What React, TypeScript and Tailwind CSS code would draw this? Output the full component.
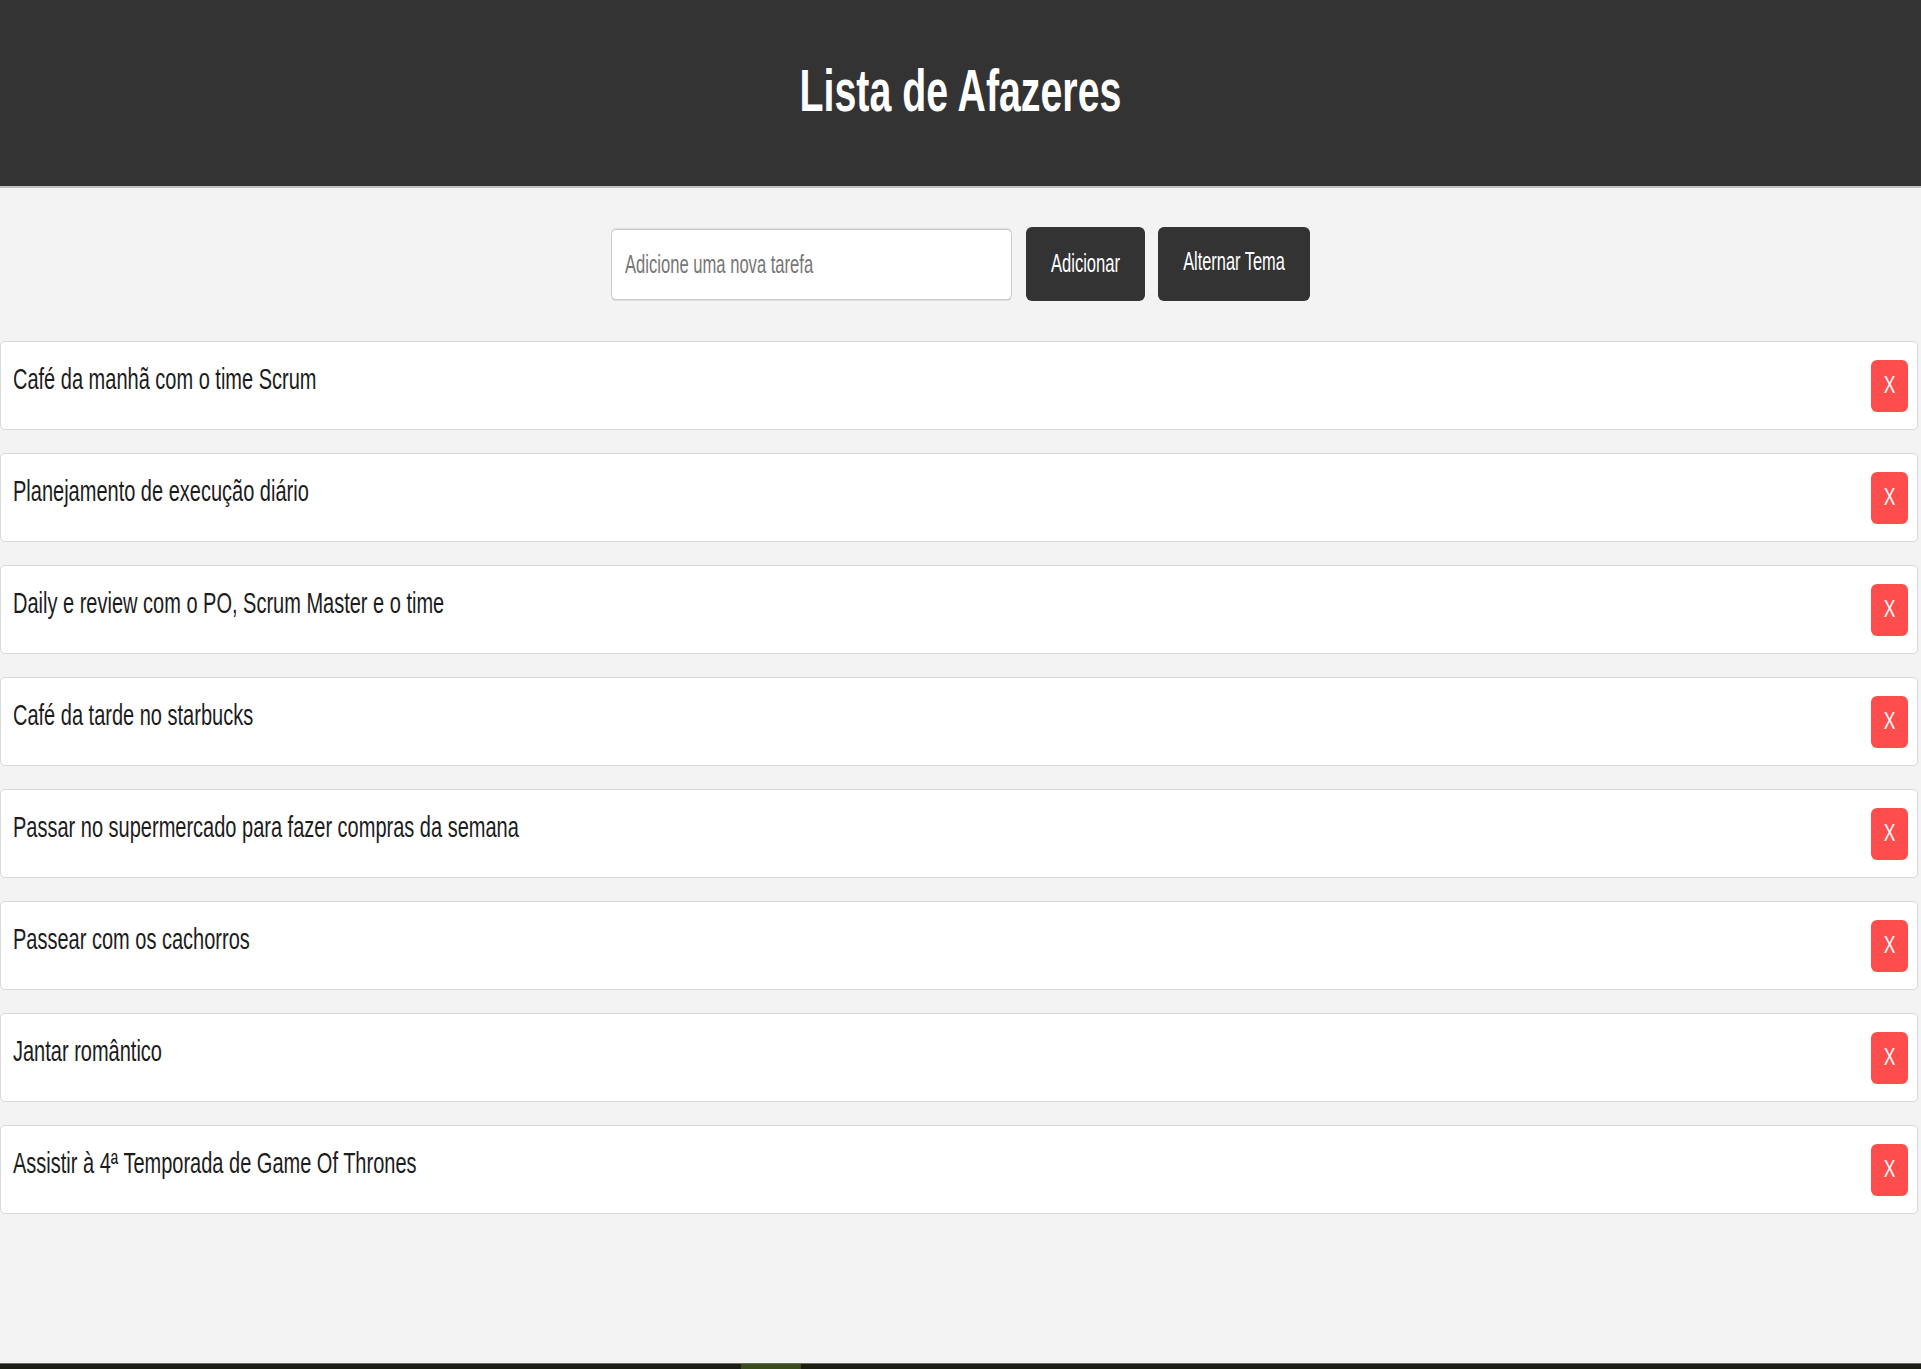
import React from 'react';

const TAREFAS = [
  'Café da manhã com o time Scrum',
  'Planejamento de execução diário',
  'Daily e review com o PO, Scrum Master e o time',
  'Café da tarde no starbucks',
  'Passar no supermercado para fazer compras da semana',
  'Passear com os cachorros',
  'Jantar romântico',
  'Assistir à 4ª Temporada de Game Of Thrones',
];

function TaskItem({ text }: { text: string }) {
  return (
    <li className="h-[89px] bg-white border border-[#d9d9d9] rounded-[5px] flex items-center justify-between pl-[12px] pr-[9px]">
      <span className="self-start mt-[27px] inline-block text-[20px] leading-none text-[#1c1c1c] scale-y-[1.47] origin-center whitespace-nowrap">
        {text}
      </span>
      <button className="w-[37px] h-[52px] rounded-[6px] bg-[#ff4d4d] text-white flex items-center justify-center">
        <span className="inline-block text-[17.5px] leading-none scale-y-[1.4]">X</span>
      </button>
    </li>
  );
}

export default function App() {
  return (
    <div className="min-h-screen flex flex-col bg-[#f3f3f3] font-['Liberation_Sans',Arial,sans-serif]">
      {/* Header */}
      <header className="h-[188px] bg-[#333333] border-b-2 border-[#c2c2c2] flex items-center justify-center">
        <h1 className="mb-[4px] inline-block text-[39.3px] leading-none font-bold text-white scale-y-[1.49] origin-center">
          Lista de Afazeres
        </h1>
      </header>

      {/* Nova tarefa */}
      <div className="mt-[39px] h-[74px] flex items-center justify-center">
        <div className="w-[401px] h-[72px] flex items-center">
          <input
            type="text"
            placeholder="Adicione uma nova tarefa"
            className="w-full h-[45px] scale-y-[1.6] origin-center bg-white border border-[#cccccc] rounded-[4px] pl-[13px] text-[16.6px] placeholder:text-[#767676] outline-none"
          />
        </div>
        <button className="ml-[14px] w-[119px] h-[74px] rounded-[6px] bg-[#333333] text-white flex items-center justify-center">
          <span className="inline-block text-[16.6px] leading-none scale-y-[1.6]">Adicionar</span>
        </button>
        <button className="ml-[13px] w-[152px] h-[74px] rounded-[6px] bg-[#333333] text-white flex items-center justify-center">
          <span className="inline-block -translate-y-[3px] text-[16.4px] leading-none scale-y-[1.6]">Alternar Tema</span>
        </button>
      </div>

      {/* Lista */}
      <ul className="mt-[40px] pr-[3px] flex flex-col gap-[23px]">
        {TAREFAS.map((t) => (
          <TaskItem key={t} text={t} />
        ))}
      </ul>

      <div className="flex-1" />
      <div className="h-[6px] bg-[#1b1c13] border-t border-[#6b6b60] flex">
        <div className="w-[741px]" />
        <div className="w-[60px] bg-[#3b4a1c]" />
      </div>
    </div>
  );
}
